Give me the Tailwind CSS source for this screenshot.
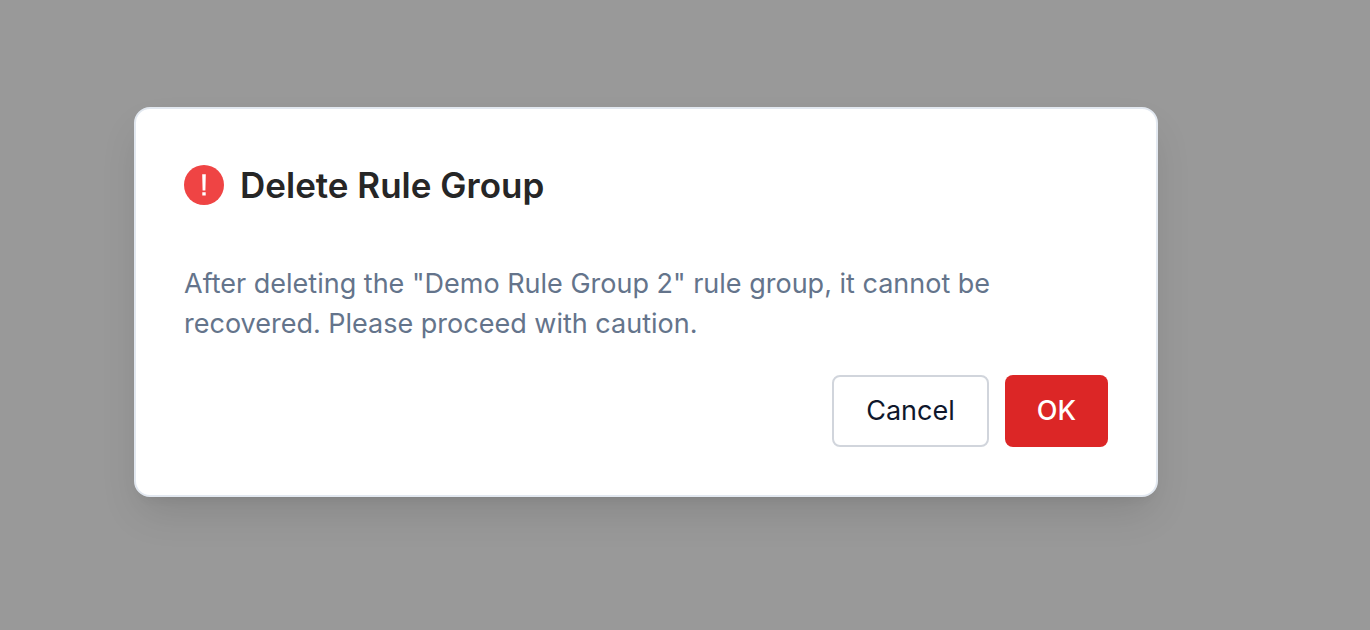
<!DOCTYPE html>
<html lang="en">
<head>
<meta charset="utf-8">
<meta name="viewport" content="width=device-width, initial-scale=1">
<title>Delete Rule Group</title>
<script src="https://cdn.jsdelivr.net/npm/@tailwindcss/browser@4"></script>
</head>
<body class="min-h-screen bg-[#999999] font-['Inter',sans-serif] pt-[107px] pl-[134px] pr-[212px] pb-8">
<div role="alertdialog" aria-modal="true" aria-labelledby="title" aria-describedby="message" class="w-full max-w-5xl rounded-2xl border-2 border-slate-200 bg-white p-12 shadow-[0_20px_40px_-6px_rgb(0_0_0/0.12),0_8px_12px_-8px_rgb(0_0_0/0.08)]">
  <h2 id="title" class="flex h-14 items-center gap-4 text-[35px] font-semibold text-[#262626]">
    <svg class="size-10 shrink-0" viewBox="0 0 40 40" aria-hidden="true">
      <circle cx="20" cy="20" r="20" fill="#ef4444"/>
      <path d="M18.2 9.2h3.6l-.4 16.4h-2.8zM18.3 27.2h3.4v3.3h-3.4z" fill="#fff"/>
    </svg>
    <span>Delete Rule Group</span>
  </h2>
  <p id="message" class="mt-[51px] text-[27px] leading-10 text-[#64748b]">After deleting the "Demo Rule Group 2" rule group, it cannot be recovered. Please proceed with caution.</p>
  <div class="mt-[31px] flex justify-end gap-4">
    <button type="button" class="h-18 rounded-lg border-2 border-gray-300 bg-white px-8 pt-px text-[27px] text-slate-900">Cancel</button>
    <button type="button" class="h-18 rounded-lg bg-[#dc2626] px-8 pt-px text-[27px] font-medium text-white">OK</button>
  </div>
</div>
</body>
</html>
